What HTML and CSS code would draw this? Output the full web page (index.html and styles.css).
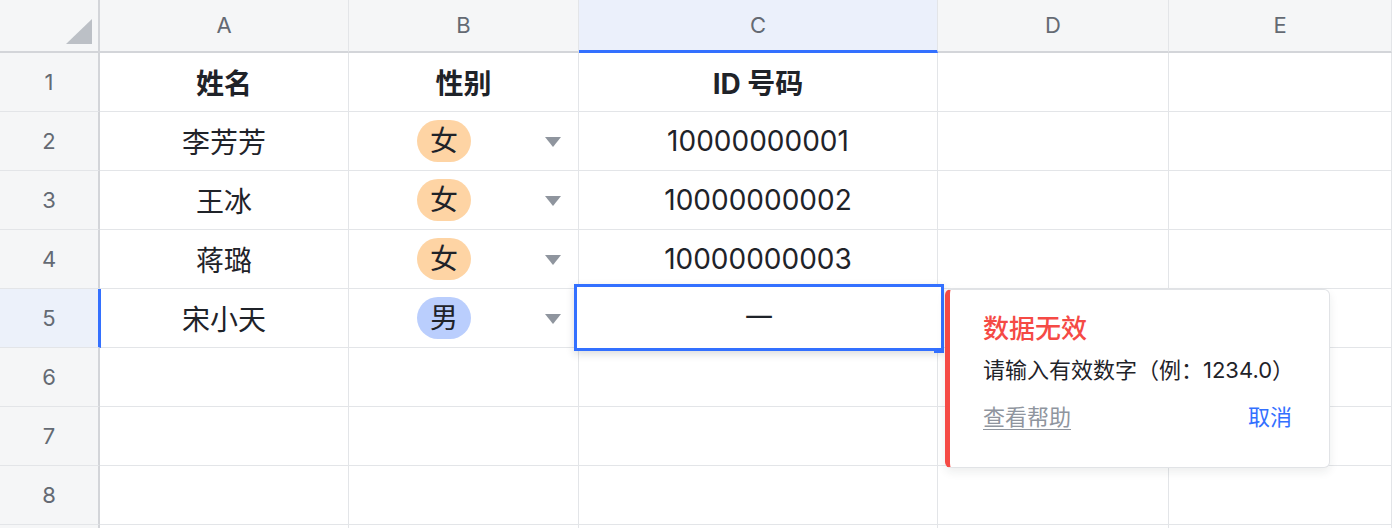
FILE: index.html
```html
<!DOCTYPE html>
<html lang="zh-CN">
<head>
<meta charset="utf-8">
<title>Sheet</title>
<link rel="stylesheet" href="styles.css">
</head>
<body>
<div class="sheet">
  <div class="grid">
    <div class="hd corner"><span class="tri"></span></div>
    <div class="hd col">A</div>
    <div class="hd col">B</div>
    <div class="hd col sel">C</div>
    <div class="hd col">D</div>
    <div class="hd col">E</div>

    <div class="rh">1</div>
    <div class="c bold">姓名</div>
    <div class="c bold">性别</div>
    <div class="c bold">ID 号码</div>
    <div class="c"></div>
    <div class="c"></div>

    <div class="rh">2</div>
    <div class="c">李芳芳</div>
    <div class="c opt"><span class="opt-box"><span class="pill f">女</span></span><span class="arrow"></span></div>
    <div class="c num">10000000001</div>
    <div class="c"></div>
    <div class="c"></div>

    <div class="rh">3</div>
    <div class="c">王冰</div>
    <div class="c opt"><span class="opt-box"><span class="pill f">女</span></span><span class="arrow"></span></div>
    <div class="c num">10000000002</div>
    <div class="c"></div>
    <div class="c"></div>

    <div class="rh">4</div>
    <div class="c">蒋璐</div>
    <div class="c opt"><span class="opt-box"><span class="pill f">女</span></span><span class="arrow"></span></div>
    <div class="c num">10000000003</div>
    <div class="c"></div>
    <div class="c"></div>

    <div class="rh sel">5</div>
    <div class="c">宋小天</div>
    <div class="c opt"><span class="opt-box"><span class="pill m">男</span></span><span class="arrow"></span></div>
    <div class="c"></div>
    <div class="c"></div>
    <div class="c"></div>

    <div class="rh">6</div>
    <div class="c"></div><div class="c"></div><div class="c"></div><div class="c"></div><div class="c"></div>
    <div class="rh">7</div>
    <div class="c"></div><div class="c"></div><div class="c"></div><div class="c"></div><div class="c"></div>
    <div class="rh">8</div>
    <div class="c"></div><div class="c"></div><div class="c"></div><div class="c"></div><div class="c"></div>
    <div class="rh"></div>
    <div class="c"></div><div class="c"></div><div class="c"></div><div class="c"></div><div class="c"></div>
  </div>

  <div class="editor">一<span class="handle"></span></div>

  <div class="tip">
    <div class="tip-title">数据无效</div>
    <div class="tip-msg">请输入有效数字（例：1234.0）</div>
    <div class="tip-actions">
      <span class="tip-help">查看帮助</span>
      <span class="tip-cancel">取消</span>
    </div>
  </div>
</div>
</body>
</html>
```

FILE: styles.css
```css
* { box-sizing: border-box; }
html, body {
  margin: 0;
  padding: 0;
  background: #ffffff;
  overflow: hidden;
}
body {
  font-family: Inter, "Noto Sans CJK SC", sans-serif;
  color: #1f2329;
}
.sheet {
  position: relative;
  width: 1392px;
  height: 528px;
  overflow: hidden;
}
.grid {
  display: grid;
  grid-template-columns: 100px 249px 230px 359px 231px 1fr;
  grid-template-rows: 53px repeat(9, 59px);
}
.hd {
  background: #f5f6f7;
  border-bottom: 2px solid #d3d5d9;
  border-right: 1px solid #e3e5e8;
  display: flex;
  align-items: center;
  justify-content: center;
  font-size: 22px;
  color: #646a73;
  padding-bottom: 1px;
}
.hd.corner {
  border-right: 2px solid #d3d5d9;
  position: relative;
}
.tri {
  position: absolute;
  right: 6px;
  bottom: 7px;
  width: 0;
  height: 0;
  border-style: solid;
  border-width: 0 0 25px 26px;
  border-color: transparent transparent #bcc0c6 transparent;
}
.hd.sel {
  background: #ebf0fb;
  border-bottom: 3px solid #3370ff;
}
.rh {
  background: #f5f6f7;
  border-right: 2px solid #d3d5d9;
  border-bottom: 1px solid #e3e5e8;
  display: flex;
  align-items: center;
  justify-content: center;
  font-size: 22px;
  color: #646a73;
}
.rh.sel {
  background: #ecf1fa;
  border-right: 3px solid #3370ff;
  margin-right: -1px;
  position: relative;
  z-index: 1;
}
.c {
  border-right: 1px solid #e3e5e8;
  border-bottom: 1px solid #e3e5e8;
  display: flex;
  align-items: center;
  justify-content: center;
  font-size: 28px;
  color: #1f2329;
}
.c.bold { font-weight: 700; }
.c.opt { justify-content: flex-start; }
.opt-box {
  flex: 1;
  display: flex;
  justify-content: center;
}
.pill {
  display: inline-flex;
  align-items: center;
  justify-content: center;
  width: 54px;
  height: 42px;
  border-radius: 21px;
  font-size: 28px;
  line-height: 1;
}
.pill.f { background: #fed4a4; }
.pill.m { background: #bacefd; }
.arrow {
  width: 0;
  height: 0;
  border-style: solid;
  border-width: 10px 8.5px 0 8.5px;
  border-color: #8f959e transparent transparent transparent;
  margin-left: 6px;
  margin-right: 17px;
  margin-top: 2px;
}
.editor {
  position: absolute;
  left: 574px;
  top: 284px;
  width: 370px;
  height: 67px;
  border: 3px solid #3370ff;
  background: #ffffff;
  box-shadow: 0 3px 8px rgba(31, 35, 41, 0.16);
  display: flex;
  align-items: center;
  justify-content: center;
  font-size: 28px;
  color: #1f2329;
  padding-bottom: 4px;
  z-index: 2;
}
.handle {
  position: absolute;
  right: -3px;
  bottom: -5px;
  width: 10px;
  height: 3px;
  background: #3370ff;
}
.tip {
  position: absolute;
  left: 945px;
  top: 289px;
  width: 385px;
  height: 179px;
  background: #ffffff;
  border: 1px solid #e1e3e6;
  border-left: 5px solid #f54a45;
  border-radius: 6px;
  box-shadow: 0 4px 10px rgba(31, 35, 41, 0.08);
  padding: 23px 37px 0 33px;
  z-index: 3;
}
.tip-title {
  font-size: 26px;
  line-height: 32px;
  font-weight: 500;
  color: #f54a45;
}
.tip-msg {
  margin-top: 10px;
  font-size: 22px;
  line-height: 30px;
  color: #1f2329;
}
.tip-actions {
  margin-top: 17px;
  display: flex;
  justify-content: space-between;
  font-size: 22px;
  line-height: 30px;
}
.tip-help {
  color: #8f959e;
  text-decoration: underline;
  text-underline-offset: 4px;
  text-decoration-thickness: 1px;
}
.tip-cancel {
  color: #3370ff;
}
```
